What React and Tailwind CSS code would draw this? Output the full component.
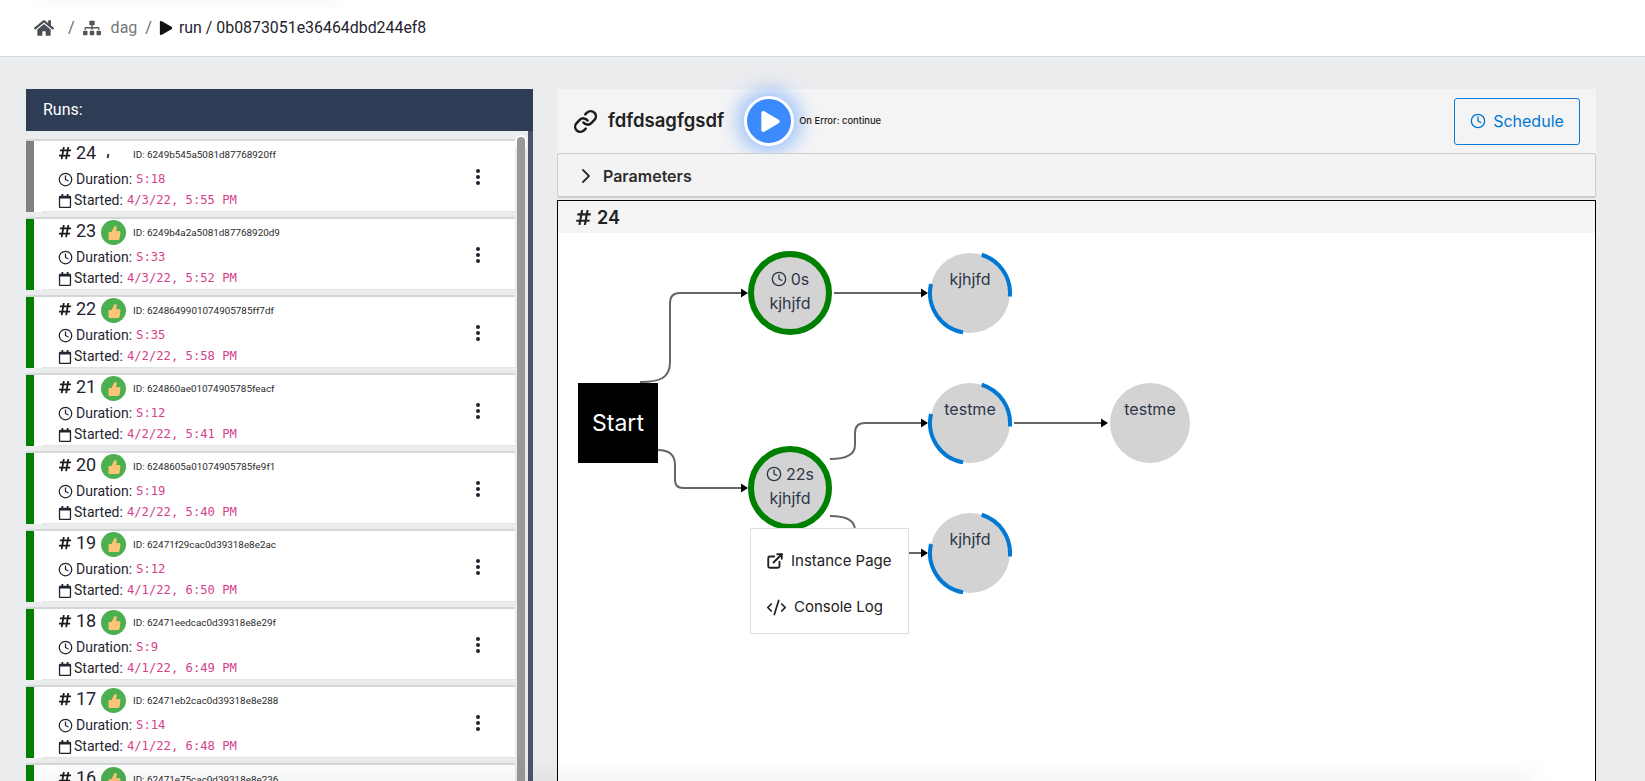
import React from 'react';
import { ExternalLink, Code2, Link } from 'lucide-react';
import { FaHome, FaSitemap, FaPlay, FaHashtag, FaRegCalendar } from 'react-icons/fa';
import { FiClock, FiChevronRight } from 'react-icons/fi';

const runs = [
  { num: 24, id: '6249b545a5081d87768920ff', dur: 'S:18', started: '4/3/22, 5:55 PM', running: true },
  { num: 23, id: '6249b4a2a5081d87768920d9', dur: 'S:33', started: '4/3/22, 5:52 PM' },
  { num: 22, id: '6248649901074905785ff7df', dur: 'S:35', started: '4/2/22, 5:58 PM' },
  { num: 21, id: '624860ae01074905785feacf', dur: 'S:12', started: '4/2/22, 5:41 PM' },
  { num: 20, id: '6248605a01074905785fe9f1', dur: 'S:19', started: '4/2/22, 5:40 PM' },
  { num: 19, id: '62471f29cac0d39318e8e2ac', dur: 'S:12', started: '4/1/22, 6:50 PM' },
  { num: 18, id: '62471eedcac0d39318e8e29f', dur: 'S:9', started: '4/1/22, 6:49 PM' },
  { num: 17, id: '62471eb2cac0d39318e8e288', dur: 'S:14', started: '4/1/22, 6:48 PM' },
  { num: 16, id: '62471e75cac0d39318e8e236' },
];

// graph nodes, centre coords inside the canvas
const nodes = [
  { x: 232, y: 60, label: 'kjhjfd', time: '0s' },
  { x: 412, y: 60, label: 'kjhjfd', arcs: true },
  { x: 232, y: 255, label: 'kjhjfd', time: '22s' },
  { x: 412, y: 190, label: 'testme', arcs: true },
  { x: 592, y: 190, label: 'testme' },
  { x: 412, y: 320, label: 'kjhjfd', arcs: true },
];

const edges = [
  'M82 149 C102 149 112 145 112 129 L112 70 Q112 60 122 60 L184 60',
  'M276 60 L364 60',
  'M100 217 Q117 217 117 232 L117 247 Q117 255 125 255 L184 255',
  'M272 226 Q297 226 297 212 L297 200 Q297 190 307 190 L364 190',
  'M456 190 L544 190',
  'M272 283 Q297 283 297 297 L297 310 Q297 320 307 320 L364 320',
];

const arrows = [[190, 60], [370, 60], [190, 255], [370, 190], [550, 190], [370, 320]];

function arcPath(from, to) {
  const r = 40;
  const pt = (a) => {
    const rad = (a * Math.PI) / 180;
    return `${42 + r * Math.sin(rad)} ${42 - r * Math.cos(rad)}`;
  };
  return `M${pt(from)} A${r} ${r} 0 0 1 ${pt(to)}`;
}

function GraphNode({ node }) {
  return (
    <div
      className="absolute w-[84px] h-[84px] flex items-center justify-center"
      style={{ left: node.x - 42, top: node.y - 42 }}
    >
      {node.time ? (
        <div className="w-[84px] h-[84px] rounded-full bg-[#d3d3d3] border-[6px] border-[#008000] pt-[10px] flex flex-col items-center text-[#2d3748] text-[16px] leading-[24px]">
          <div className="flex items-center gap-[4px]">
            <FiClock size={16} />
            <span>{node.time}</span>
          </div>
          <span>{node.label}</span>
        </div>
      ) : (
        <div className="w-[80px] h-[80px] rounded-full bg-[#d3d3d3] pt-[14px] flex flex-col items-center text-[#2d3748] text-[16px] leading-[24px]">
          <span>{node.label}</span>
        </div>
      )}
      {node.arcs && (
        <svg className="absolute left-0 top-0" width="84" height="84" fill="none" stroke="#0078d4" strokeWidth="4">
          <path d={arcPath(17, 95)} />
          <path d={arcPath(190, 283)} />
        </svg>
      )}
    </div>
  );
}

function ThumbBadge() {
  return (
    <div className="w-[25px] h-[25px] ml-[1px] rounded-full bg-[#4caf50] flex items-center justify-center">
      <svg width="14" height="16" viewBox="0 0 14 16" fill="#fbc575">
        <path d="M1.5 8 Q1.5 7 2.5 7 L4.5 7 L7 2 Q7.6 0.8 8.6 1 Q10.2 1.4 9.7 3.4 L9 6 L12 6 Q13.6 6 13.4 7.5 L12.6 13.5 Q12.4 15 10.6 15 L2.8 15 Q1.5 15 1.5 13.8 Z" />
      </svg>
    </div>
  );
}

function RunRow({ run }) {
  return (
    <div className="flex h-[73px] mb-[5px] shrink-0 border-t-2 border-[#d5d6d8] bg-white font-['Roboto',sans-serif] text-[#1f2430]">
      <div className={`w-[8px] ${run.running ? 'bg-[#808080]' : 'bg-[#008000]'}`} />
      <div className="flex-1 ml-[8px] flex border-b border-[#e2e3e5]">
        <div className="flex-1 pl-[16px] flex flex-col">
          <div className="flex items-center h-[29px]">
            <FaHashtag size={14} className="-mt-[3px] text-[#1a1a1a]" />
            <span className="-mt-[3px] ml-[4px] w-[24px] text-[18px] leading-none">{run.num}</span>
            {run.running ? (
              <div className="w-[25px] ml-[1px] flex justify-center">
                <div className="w-[2px] h-[4px] bg-[#2d3748] rotate-12 mt-[3px] -ml-[12px]" />
              </div>
            ) : (
              <ThumbBadge />
            )}
            <span className="ml-[7px] text-[9.9px] leading-none text-[#2a2a2a]">ID: {run.id}</span>
          </div>
          {run.dur && (
            <>
              <div className="flex items-center h-[21px] mt-[1px] text-[14px]">
                <FiClock size={15} className="mr-[3px]" />
                <span>Duration:</span>
                <span className="ml-[4px] font-['DejaVu_Sans_Mono',monospace] text-[12.2px] text-[#d53f8c]">{run.dur}</span>
              </div>
              <div className="flex items-center h-[21px] text-[14px]">
                <FaRegCalendar size={14} className="mr-[2px]" />
                <span>Started:</span>
                <span className="ml-[4px] font-['DejaVu_Sans_Mono',monospace] text-[12.2px] text-[#d53f8c]">{run.started}</span>
              </div>
            </>
          )}
        </div>
        <div className="w-[74px] flex items-center justify-center pt-[1px]">
          {run.dur && (
            <svg width="6" height="16" viewBox="0 0 6 16" fill="#1f2430">
              <circle cx="3" cy="2" r="2" />
              <circle cx="3" cy="8" r="2" />
              <circle cx="3" cy="14" r="2" />
            </svg>
          )}
        </div>
      </div>
    </div>
  );
}

export default function App() {
  return (
    <div className="relative h-screen overflow-hidden bg-[#ebecee] font-['Inter',sans-serif] flex flex-col">
      {/* top bar */}
      <div className="h-[57px] shrink-0 bg-white border-b border-[#d5d8dc] flex items-center pl-[34px] pb-[1px] font-['Roboto',sans-serif] text-[16px] text-[#1f2430]">
        <FaHome size={20} className="text-[#4a4f57]" />
        <span className="ml-[14px] text-[#666]">/</span>
        <FaSitemap size={18} className="ml-[8px] text-[#555]" />
        <span className="ml-[10px] text-[#777]">dag</span>
        <span className="ml-[8px] text-[#666]">/</span>
        <FaPlay size={14} className="ml-[7px] text-[#111]" />
        <span className="ml-[6px] text-[15.9px]">run / 0b0873051e36464dbd244ef8</span>
      </div>

      <div className="flex-1 min-h-0 flex pt-[32px] pl-[26px] pr-[49px]">
        {/* runs panel */}
        <div className="w-[507px] shrink-0 flex flex-col">
          <div className="h-[42px] shrink-0 bg-[#2f3c55] text-white font-['Roboto',sans-serif] text-[16px] flex items-center pl-[17px]">
            Runs:
          </div>
          <div className="flex-1 min-h-0 flex overflow-hidden">
            <div className="w-[489px] shrink-0 pt-[8px] flex flex-col">
              {runs.map((run) => (
                <RunRow key={run.num} run={run} />
              ))}
            </div>
            <div className="w-[13px] pl-[2px] pt-[6px]">
              <div className="relative w-[8px] h-full">
                <div className="absolute -top-[2px] -left-[2px] w-[12px] h-[12px] rounded-t-full bg-white" />
                <div className="relative w-[8px] h-full rounded-t-full bg-[#999999]" />
              </div>
            </div>
            <div className="flex-1 bg-[#4a5568]" />
          </div>
        </div>

        {/* detail panel */}
        <div className="ml-[24px] flex-1 min-w-0 flex flex-col">
          <div className="h-[64px] shrink-0 bg-[#f4f4f5] flex items-center pl-[16px] pr-[16px]">
            <Link size={25} strokeWidth={2.4} className="text-[#1a1a1a]" />
            <span className="ml-[10px] text-[18.5px] font-semibold text-[#222]">fdfdsagfgsdf</span>
            <button className="ml-[20px] w-[50px] h-[50px] rounded-full bg-[#3b8bff] border-[3px] border-white shadow-[0_0_18px_7px_rgba(59,139,255,0.45)] flex items-center justify-center">
              <FaPlay size={21} className="text-white ml-[3px]" />
            </button>
            <span className="ml-[5px] text-[9.4px] font-medium text-[#222]">On Error: continue</span>
            <button className="ml-auto w-[126px] h-[47px] rounded-[3px] border border-[#0a7ad6] text-[#0078d4] text-[16px] flex items-center justify-center gap-[7px]">
              <FiClock size={16} />
              Schedule
            </button>
          </div>

          <div className="h-[45px] shrink-0 bg-[#f3f3f4] border border-b-2 border-[#cccccc] rounded-[3px] flex items-center pt-[2px] pl-[16px] text-[#2d2d2d]">
            <FiChevronRight size={24} strokeWidth={1.8} />
            <span className="ml-[5px] text-[16px] font-semibold">Parameters</span>
          </div>

          <div className="flex-1 min-h-0 mt-[2px] border border-b-0 border-black bg-white flex flex-col">
            <div className="h-[32px] shrink-0 bg-[#f4f4f5] flex items-center pl-[17px] text-[#222]">
              <FaHashtag size={17} />
              <span className="ml-[5px] text-[18px] font-semibold">24</span>
            </div>
            <div className="relative flex-1">
              <svg className="absolute left-0 top-0" width="700" height="500" fill="none" stroke="#666666" strokeWidth="2">
                {edges.map((d) => (
                  <path key={d} d={d} />
                ))}
                {arrows.map(([x, y]) => (
                  <polygon key={`${x}-${y}`} points={`${x - 7},${y - 4.5} ${x},${y} ${x - 7},${y + 4.5}`} fill="#000000" stroke="none" />
                ))}
              </svg>
              {nodes.map((node) => (
                <GraphNode key={`${node.x}-${node.y}`} node={node} />
              ))}
              <div className="absolute left-[20px] top-[150px] w-[80px] h-[80px] bg-black text-white text-[23px] flex items-center justify-center">
                Start
              </div>
              {/* context menu */}
              <div className="absolute left-[192px] top-[295px] w-[159px] h-[106px] pt-[9px] bg-white border border-[#dddddd] flex flex-col text-[15px] text-[#222]">
                <div className="h-[46px] flex items-center pl-[15px] gap-[7px]">
                  <ExternalLink size={18} strokeWidth={2.5} />
                  Instance Page
                </div>
                <div className="h-[47px] flex items-center pl-[15px] gap-[7px]">
                  <Code2 size={21} strokeWidth={2} />
                  Console Log
                </div>
              </div>
            </div>
          </div>
        </div>
      </div>

      {/* soft shade along the top and bottom edges */}
      <div className="absolute left-[40px] top-0 w-[300px] h-[3px] bg-[#f0f0f0] blur-[4px]" />
      <div className="absolute left-[40px] right-[110px] -bottom-[8px] h-[16px] bg-black/5 blur-[10px]" />
    </div>
  );
}
